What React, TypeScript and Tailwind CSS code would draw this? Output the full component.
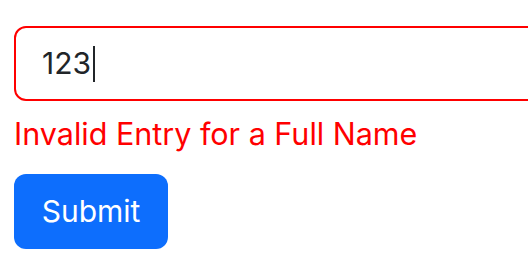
import React from "react";

export default function App() {
  return (
    <div
      className="h-[274px] w-[528px] overflow-hidden bg-white"
      style={{ fontFamily: "Inter, 'Noto Sans', sans-serif" }}
    >
      <form className="flex flex-col pl-[14px] pt-[26px]" onSubmit={(e) => e.preventDefault()}>
        <div
          role="textbox"
          aria-invalid="true"
          className="flex h-[75px] w-[560px] items-center rounded-[12px] border-2 border-[#ff0000] pl-[26px] text-[30px] text-[#212529]"
        >
          <span>123</span>
          <span className="ml-[2px] h-[36px] w-[2px] bg-[#212529]" />
        </div>
        <p className="mt-[12px] text-[30.5px] leading-[42px] text-[#ff0000]">Invalid Entry for a Full Name</p>
        <button
          type="submit"
          className="mt-[19px] flex h-[75px] w-[154px] items-center justify-center rounded-[12px] bg-[#0d6efd] text-[30px] text-white"
        >
          Submit
        </button>
      </form>
    </div>
  );
}
